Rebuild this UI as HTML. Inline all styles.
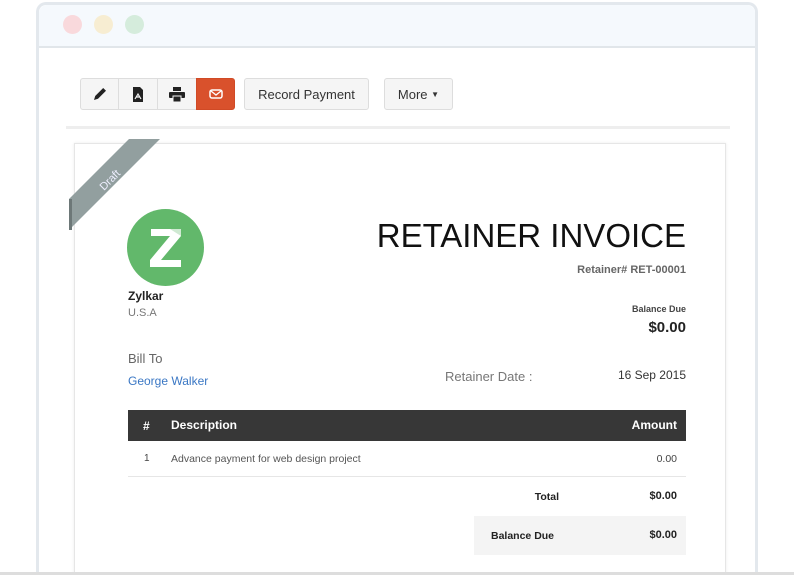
<!DOCTYPE html>
<html style="width:794px;height:575px;overflow:hidden"><head><meta charset="utf-8"><style>
*{margin:0;padding:0;box-sizing:border-box}
body{width:794px;height:575px;overflow:hidden;background:#fff;font-family:"Liberation Sans",sans-serif;position:relative;color:#222}
.abs{position:absolute}
.frame{left:36px;top:2px;width:722px;height:573px;border:3px solid #e3e8ed;border-bottom:none;border-radius:10px 10px 0 0;background:#fff}
.bar{left:39px;top:5px;width:716px;height:43px;background:#f5f9fd;border-bottom:2px solid #e1e6ea;border-radius:8px 8px 0 0}
.dot{width:19px;height:19px;border-radius:50%;top:15px}
.btn{top:78px;height:32px;background:#f5f5f5;border:1px solid #ddd;font-size:13px;color:#333;display:flex;align-items:center;justify-content:center}
.card{left:74px;top:143px;width:652px;height:432px;border:1px solid #e6e6e6;border-bottom:none;box-shadow:0 0 3px rgba(0,0,0,.08);background:#fff}
.r{text-align:right}
</style></head><body>
<div class="abs frame"></div>
<div class="abs bar"></div>
<div class="abs dot" style="left:63px;background:#f9d9dc"></div>
<div class="abs dot" style="left:94px;background:#f7edd2"></div>
<div class="abs dot" style="left:125px;background:#d5ecdc"></div>

<div class="abs btn" style="left:80px;width:39px;border-radius:3px 0 0 3px">
<svg width="16" height="16" viewBox="0 0 16 16"><path d="M2 14l1.2-4 8-8 2.8 2.8-8 8z" fill="#222"/></svg></div>
<div class="abs btn" style="left:118px;width:40px">
<svg width="12" height="15" viewBox="0 0 12 15"><path d="M1 0h7l3 3v12H1z" fill="#222"/><path d="M3 12l3-5 3 5M4 10h4" stroke="#f5f5f5" stroke-width="1.2" fill="none"/></svg></div>
<div class="abs btn" style="left:157px;width:40px">
<svg width="16" height="15" viewBox="0 0 16 15"><rect x="4" y="0" width="8" height="4" fill="#222"/><rect x="0" y="5" width="16" height="6" rx="1" fill="#222"/><rect x="4" y="9" width="8" height="6" fill="#222" stroke="#f5f5f5"/></svg></div>
<div class="abs btn" style="left:196px;width:39px;background:#d9512c;border-color:#d04a26;border-radius:0 3px 3px 0">
<svg width="14" height="10" viewBox="0 0 14 10"><rect x="1" y="1" width="12" height="8" rx="2" fill="none" stroke="#fff" stroke-width="1.5"/><path d="M2 2l5 4 5-4" stroke="#fff" stroke-width="1.3" fill="none"/></svg></div>
<div class="abs btn" style="left:244px;width:125px;border-radius:3px">Record Payment</div>
<div class="abs btn" style="left:384px;width:69px;border-radius:3px">More&nbsp;<span style="font-size:8px">▼</span></div>

<div class="abs" style="left:66px;top:126px;width:664px;height:3px;background:#eee"></div>

<div class="abs card"></div>
<svg class="abs" style="left:69px;top:139px" width="95" height="95" viewBox="0 0 95 95">
<polygon points="60,0 91,0 0,91 0,60" fill="#929f9f"/>
<polygon points="0,91 0,60 3,60 3,91" fill="#6d7878"/>
<text x="0" y="0" transform="translate(35,52) rotate(-45)" font-family="Liberation Sans" font-size="11" fill="#eef">Draft</text>
</svg>
<div class="abs" style="left:127px;top:209px;width:77px;height:77px;border-radius:50%;background:#62b86b"></div>
<svg class="abs" style="left:146px;top:226px" width="40" height="44" viewBox="0 0 40 44"><path d="M5 3h30v7L15 34h20v7H4v-7L24 10H5z" fill="#fff"/><path d="M24 3h11v7z" fill="#cfe9d2"/></svg>

<div class="abs" style="left:0;width:686px;top:217px;font-size:33px;text-align:right;color:#111">RETAINER INVOICE</div>
<div class="abs r" style="left:0;width:686px;top:264px;font-size:11px;font-weight:bold;color:#666">Retainer# RET-00001</div>
<div class="abs r" style="left:0;width:686px;top:304px;font-size:9px;font-weight:bold;color:#444">Balance Due</div>
<div class="abs r" style="left:0;width:686px;top:319px;font-size:15px;font-weight:bold;color:#222">$0.00</div>
<div class="abs" style="left:128px;top:289px;font-size:12px;font-weight:bold">Zylkar</div>
<div class="abs" style="left:128px;top:307px;font-size:11px;color:#777">U.S.A</div>
<div class="abs" style="left:128px;top:351px;font-size:13px;color:#666">Bill To</div>
<div class="abs" style="left:128px;top:374px;font-size:12px;color:#3a77c4">George Walker</div>
<div class="abs" style="left:445px;top:369px;font-size:13px;color:#777">Retainer Date :</div>
<div class="abs r" style="left:0;width:686px;top:368px;font-size:12px;color:#333">16 Sep 2015</div>

<div class="abs" style="left:128px;top:410px;width:558px;height:31px;background:#373737"></div>
<div class="abs" style="left:143px;top:419px;font-size:12px;font-weight:bold;color:#fff">#</div>
<div class="abs" style="left:171px;top:418px;font-size:12px;font-weight:bold;color:#fff">Description</div>
<div class="abs r" style="left:0;width:677px;top:418px;font-size:12px;font-weight:bold;color:#fff">Amount</div>
<div class="abs" style="left:144px;top:453px;font-size:10px;color:#444">1</div>
<div class="abs" style="left:171px;top:453px;font-size:10.5px;color:#555">Advance payment for web design project</div>
<div class="abs r" style="left:0;width:677px;top:453px;font-size:10.5px;color:#444">0.00</div>
<div class="abs" style="left:128px;top:476px;width:558px;height:1px;background:#e6e6e6"></div>
<div class="abs r" style="left:0;width:559px;top:491px;font-size:10.5px;font-weight:bold">Total</div>
<div class="abs r" style="left:0;width:677px;top:490px;font-size:11px;font-weight:bold">$0.00</div>
<div class="abs" style="left:474px;top:516px;width:212px;height:39px;background:#f4f4f4"></div>
<div class="abs" style="left:491px;top:530px;font-size:10.5px;font-weight:bold">Balance Due</div>
<div class="abs r" style="left:0;width:677px;top:529px;font-size:11px;font-weight:bold">$0.00</div>
<div class="abs" style="left:0;top:572px;width:794px;height:3px;background:#ddd"></div>
</body></html>
